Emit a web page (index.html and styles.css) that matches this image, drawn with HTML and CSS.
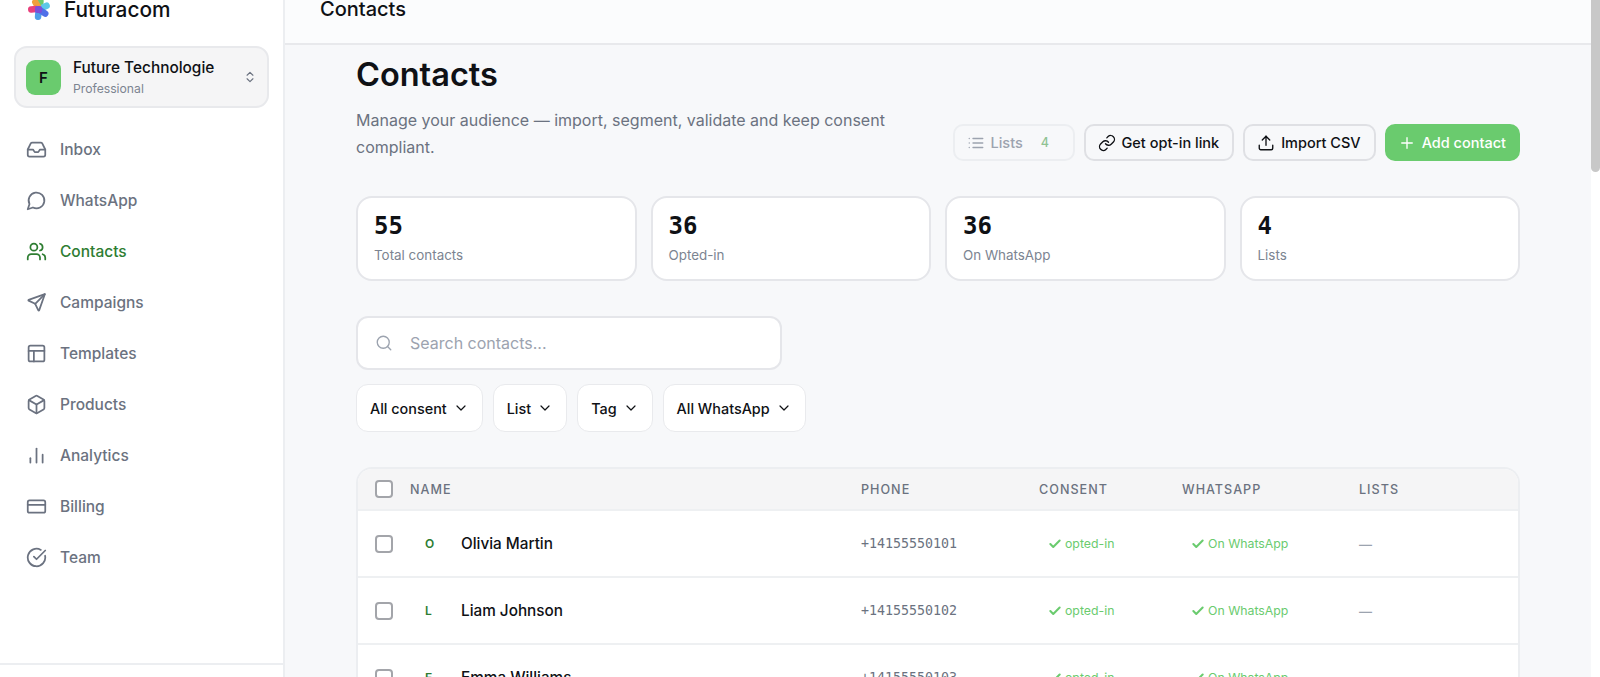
FILE: index.html
```html
<!DOCTYPE html>
<html lang="en">
<head>
  <meta charset="UTF-8" />
  <meta name="viewport" content="width=device-width, initial-scale=1" />
  <title>Contacts</title>
  <link rel="stylesheet" href="styles.css">
</head>
<body>
  <div class="app">
    <aside class="sidebar">
      <div class="brand">
        <svg class="brand-logo" viewBox="0 0 24 24">
          <rect x="9.5" y="-1" width="6.5" height="11" rx="3.2" fill="#6acb6e" transform="rotate(5 12 10)" />
          <rect x="9" y="-1.5" width="6.5" height="11" rx="3.2" fill="#5cc8e8" transform="rotate(65 12 10)" />
          <rect x="9" y="-1" width="6.5" height="11" rx="3.2" fill="#f0a03c" transform="rotate(-30 12 10)" />
          <rect x="9" y="-1" width="6.5" height="11" rx="3.2" fill="#e8407c" transform="rotate(-95 12 10)" />
          <rect x="9" y="-1" width="6.5" height="11" rx="3.2" fill="#4f9ee8" transform="rotate(185 12 10)" />
          <rect x="9" y="-1" width="6.5" height="11" rx="3.2" fill="#4f6fe8" transform="rotate(125 12 10)" />
          <rect x="8" y="7" width="7" height="7" rx="2" fill="#7b4fd8" />
        </svg>
        <span class="brand-name">Futuracom</span>
      </div>

      <div class="workspace">
        <div class="workspace-avatar">F</div>
        <div class="workspace-text">
          <div class="workspace-name">Future Technologie</div>
          <div class="workspace-plan">Professional</div>
        </div>
        <svg class="icon workspace-chevrons" viewBox="0 0 24 24"><path d="m7 15 5 5 5-5" /><path d="m7 9 5-5 5 5" /></svg>
      </div>

      <nav class="nav">
        <a class="nav-item">
          <svg class="icon" viewBox="0 0 24 24"><path d="M22 12h-6l-2 3h-4l-2-3H2" /><path d="M5.45 5.11 2 12v6a2 2 0 0 0 2 2h16a2 2 0 0 0 2-2v-6l-3.45-6.89A2 2 0 0 0 16.76 4H7.24a2 2 0 0 0-1.79 1.11z" /></svg>
          Inbox
        </a>
        <a class="nav-item">
          <svg class="icon" viewBox="0 0 24 24"><path d="M7.9 20A9 9 0 1 0 4 16.1L2 22z" /></svg>
          WhatsApp
        </a>
        <a class="nav-item active">
          <svg class="icon" viewBox="0 0 24 24"><path d="M16 21v-2a4 4 0 0 0-4-4H6a4 4 0 0 0-4 4v2" /><circle cx="9" cy="7" r="4" /><path d="M22 21v-2a4 4 0 0 0-3-3.87" /><path d="M16 3.13a4 4 0 0 1 0 7.75" /></svg>
          Contacts
        </a>
        <a class="nav-item">
          <svg class="icon" viewBox="0 0 24 24"><path d="M21.5 2.5 10.5 13.5" /><path d="M21.5 2.5 15 21a.5.5 0 0 1-.9.05L10.5 13.5 2.95 9.9a.5.5 0 0 1 .05-.9z" /></svg>
          Campaigns
        </a>
        <a class="nav-item">
          <svg class="icon" viewBox="0 0 24 24"><rect x="3" y="3" width="18" height="18" rx="2" /><path d="M3 9h18" /><path d="M9 21V9" /></svg>
          Templates
        </a>
        <a class="nav-item">
          <svg class="icon" viewBox="0 0 24 24"><path d="M21 8a2 2 0 0 0-1-1.73l-7-4a2 2 0 0 0-2 0l-7 4A2 2 0 0 0 3 8v8a2 2 0 0 0 1 1.73l7 4a2 2 0 0 0 2 0l7-4A2 2 0 0 0 21 16z" /><path d="m3.3 7 8.7 5 8.7-5" /><path d="M12 22V12" /></svg>
          Products
        </a>
        <a class="nav-item">
          <svg class="icon" viewBox="0 0 24 24"><path d="M12 20V4" /><path d="M19 20v-9" /><path d="M5 20v-5" /></svg>
          Analytics
        </a>
        <a class="nav-item">
          <svg class="icon" viewBox="0 0 24 24"><rect x="2" y="5" width="20" height="14" rx="2" /><path d="M2 10h20" /></svg>
          Billing
        </a>
        <a class="nav-item">
          <svg class="icon" viewBox="0 0 24 24"><path d="M21.8 10A10 10 0 1 1 17 3.34" /><path d="m9 11 3 3L22 4" /></svg>
          Team
        </a>
      </nav>

      <div class="sidebar-footer"></div>
    </aside>

    <main class="main">
      <header class="topbar">Contacts</header>

      <div class="content">
        <h1 class="page-title">Contacts</h1>

        <div class="page-head">
          <p class="page-desc">Manage your audience — import, segment, validate and keep consent compliant.</p>
          <div class="actions">
            <button class="btn btn-muted">
              <svg class="icon" viewBox="0 0 24 24"><path d="M8 6h13" /><path d="M8 12h13" /><path d="M8 18h13" /><path d="M3 6h.01" /><path d="M3 12h.01" /><path d="M3 18h.01" /></svg>
              Lists <span class="btn-count">4</span>
            </button>
            <button class="btn">
              <svg class="icon" viewBox="0 0 24 24"><path d="M10 13a5 5 0 0 0 7.54.54l3-3a5 5 0 0 0-7.07-7.07l-1.72 1.71" /><path d="M14 11a5 5 0 0 0-7.54-.54l-3 3a5 5 0 0 0 7.07 7.07l1.71-1.71" /></svg>
              Get opt-in link
            </button>
            <button class="btn">
              <svg class="icon" viewBox="0 0 24 24"><path d="M21 15v4a2 2 0 0 1-2 2H5a2 2 0 0 1-2-2v-4" /><path d="m17 8-5-5-5 5" /><path d="M12 3v12" /></svg>
              Import CSV
            </button>
            <button class="btn btn-primary">
              <svg class="icon" viewBox="0 0 24 24"><path d="M5 12h14" /><path d="M12 5v14" /></svg>
              Add contact
            </button>
          </div>
        </div>

        <div class="stats">
          <div class="stat"><div class="stat-value">55</div><div class="stat-label">Total contacts</div></div>
          <div class="stat"><div class="stat-value">36</div><div class="stat-label">Opted-in</div></div>
          <div class="stat"><div class="stat-value">36</div><div class="stat-label">On WhatsApp</div></div>
          <div class="stat"><div class="stat-value">4</div><div class="stat-label">Lists</div></div>
        </div>

        <div class="search">
          <svg class="icon" viewBox="0 0 24 24"><circle cx="11" cy="11" r="8" /><path d="m21 21-4.3-4.3" /></svg>
          <span>Search contacts...</span>
        </div>

        <div class="filters">
          <button class="filter">All consent <svg class="icon" viewBox="0 0 24 24"><path d="m6 9 6 6 6-6" /></svg></button>
          <button class="filter">List <svg class="icon" viewBox="0 0 24 24"><path d="m6 9 6 6 6-6" /></svg></button>
          <button class="filter">Tag <svg class="icon" viewBox="0 0 24 24"><path d="m6 9 6 6 6-6" /></svg></button>
          <button class="filter">All WhatsApp <svg class="icon" viewBox="0 0 24 24"><path d="m6 9 6 6 6-6" /></svg></button>
        </div>

        <div class="table">
          <div class="row row-head">
            <span class="checkbox"></span>
            <span>Name</span>
            <span>Phone</span>
            <span>Consent</span>
            <span>WhatsApp</span>
            <span>Lists</span>
          </div>
          <div class="row">
            <span class="checkbox"></span>
            <span class="contact"><span class="contact-initial">O</span>Olivia Martin</span>
            <span class="phone">+14155550101</span>
            <span class="tag"><svg class="icon" viewBox="0 0 24 24"><path d="M20 6 9 17l-5-5" /></svg>opted-in</span>
            <span class="tag"><svg class="icon" viewBox="0 0 24 24"><path d="M20 6 9 17l-5-5" /></svg>On WhatsApp</span>
            <span class="none">—</span>
          </div>
          <div class="row">
            <span class="checkbox"></span>
            <span class="contact"><span class="contact-initial">L</span>Liam Johnson</span>
            <span class="phone">+14155550102</span>
            <span class="tag"><svg class="icon" viewBox="0 0 24 24"><path d="M20 6 9 17l-5-5" /></svg>opted-in</span>
            <span class="tag"><svg class="icon" viewBox="0 0 24 24"><path d="M20 6 9 17l-5-5" /></svg>On WhatsApp</span>
            <span class="none">—</span>
          </div>
          <div class="row">
            <span class="checkbox"></span>
            <span class="contact"><span class="contact-initial">E</span>Emma Williams</span>
            <span class="phone">+14155550103</span>
            <span class="tag"><svg class="icon" viewBox="0 0 24 24"><path d="M20 6 9 17l-5-5" /></svg>opted-in</span>
            <span class="tag"><svg class="icon" viewBox="0 0 24 24"><path d="M20 6 9 17l-5-5" /></svg>On WhatsApp</span>
            <span class="none">—</span>
          </div>
        </div>
      </div>
    </main>

    <div class="scrollbar"><div class="scrollbar-thumb"></div></div>
  </div>
</body>
</html>
```

FILE: styles.css
```css
* {
  box-sizing: border-box;
}

html, body {
  margin: 0;
  height: 100%;
  overflow: hidden;
}

body {
  font-family: Inter, "Noto Sans", sans-serif;
  color: #0f1115;
  background: #f7f8fa;
}

.app {
  display: flex;
  height: 677px;
}

.icon {
  width: 20px;
  height: 20px;
  flex: none;
  fill: none;
  stroke: currentColor;
  stroke-width: 2;
  stroke-linecap: round;
  stroke-linejoin: round;
}

/* sidebar */
.sidebar {
  width: 285px;
  flex: none;
  display: flex;
  flex-direction: column;
  background: #fff;
  border-right: 2px solid #eceef1;
}

.brand {
  height: 46px;
  display: flex;
  align-items: flex-start;
  gap: 13px;
  padding-left: 27px;
}

.brand-logo {
  width: 24px;
  height: 24px;
  margin-top: -1px;
  overflow: visible;
}

.brand-name {
  font-size: 20.8px;
  font-weight: 500;
  line-height: 20px;
}

.workspace {
  margin: 0 14px;
  height: 62px;
  display: flex;
  align-items: center;
  gap: 12px;
  padding: 0 10px 0 10px;
  background: #f5f5f6;
  border: 2px solid #e8e9ec;
  border-radius: 13px;
}

.workspace-avatar {
  width: 35px;
  height: 35px;
  flex: none;
  display: flex;
  align-items: center;
  justify-content: center;
  background: #6acb6e;
  border-radius: 9px;
  font-size: 15px;
  font-weight: 600;
}

.workspace-text {
  flex: 1;
  padding-top: 1px;
}

.workspace-name {
  font-size: 15.4px;
  font-weight: 500;
  line-height: 20px;
}

.workspace-plan {
  font-size: 12.2px;
  line-height: 18px;
  margin-top: 2px;
  color: #7c8491;
}

.workspace-chevrons {
  width: 14px;
  height: 18px;
  color: #6b7280;
}

.nav {
  flex: 1;
  padding-top: 16px;
}

.nav-item {
  height: 51px;
  display: flex;
  align-items: center;
  gap: 13px;
  padding-left: 26px;
  font-size: 15.5px;
  font-weight: 500;
  color: #6b7280;
}

.nav-item .icon {
  width: 21px;
  height: 21px;
}

.nav-item.active {
  color: #2e7d32;
}

.sidebar-footer {
  height: 14px;
  border-top: 2px solid #eceef1;
}

/* main column */
.main {
  flex: 1;
  min-width: 0;
  overflow: hidden;
}

.topbar {
  height: 45px;
  padding-left: 35px;
  background: #fbfcfd;
  border-bottom: 2px solid #e8e9ec;
  font-size: 20px;
  font-weight: 500;
  line-height: 19px;
}

.content {
  width: 1164px;
  margin: 0 auto;
}

.page-title {
  margin: 11px 0 0;
  font-size: 32.5px;
  font-weight: 600;
  line-height: 38px;
}

.page-head {
  display: flex;
  justify-content: space-between;
  align-items: flex-end;
  margin-top: 13px;
}

.page-desc {
  width: 560px;
  margin: 0;
  font-size: 16px;
  line-height: 27px;
  color: #6b7280;
}

.actions {
  display: flex;
  gap: 9px;
}

.btn {
  height: 37px;
  display: flex;
  align-items: center;
  gap: 6px;
  padding: 0 13px 0 12px;
  font: 500 14.5px Inter, sans-serif;
  color: #0f1115;
  background: #f7f8fa;
  border: 2px solid #dfe0e4;
  border-radius: 10px;
}

.btn .icon {
  width: 18px;
  height: 18px;
  stroke-width: 1.8;
}

.btn-muted {
  width: 122px;
  color: #9ca3af;
  border-color: #eceef1;
}

.btn-count {
  margin-left: 12px;
  font-size: 12.5px;
  color: #8fc293;
}

.btn-primary {
  padding: 0 12px 0 11px;
  color: #fff;
  background: #6acb6e;
  border-color: #6acb6e;
}

/* stat cards */
.stats {
  display: grid;
  grid-template-columns: repeat(4, 1fr);
  gap: 14px;
  margin-top: 35px;
}

.stat {
  height: 85px;
  padding: 13px 16px;
  background: #fff;
  border: 2px solid #e5e6ea;
  border-radius: 16px;
}

.stat-value {
  font: 700 24px/30px "DejaVu Sans Mono", monospace;
}

.stat-label {
  margin-top: 5px;
  font-size: 13.4px;
  line-height: 18px;
  color: #7c8491;
}

/* search + filters */
.search {
  width: 426px;
  height: 54px;
  display: flex;
  align-items: center;
  gap: 17px;
  margin-top: 35px;
  padding: 0 17px;
  background: #fff;
  border: 2px solid #e5e6ea;
  border-radius: 12px;
  font-size: 16px;
  color: #9ca3af;
}

.search .icon {
  width: 18px;
  height: 18px;
  stroke-width: 1.8;
}

.filters {
  display: flex;
  gap: 10px;
  margin-top: 14px;
}

.filter {
  height: 48px;
  display: flex;
  align-items: center;
  gap: 6px;
  padding: 0 13px;
  font: 500 14.4px Inter, sans-serif;
  color: #0f1115;
  background: #fff;
  border: 1px solid #e9eaed;
  border-radius: 12px;
}

.filter .icon {
  width: 16px;
  height: 16px;
  stroke-width: 1.8;
}

/* contacts table */
.table {
  margin-top: 35px;
  background: #fff;
  border: 2px solid #eceef1;
  border-bottom: 0;
  border-radius: 16px 16px 0 0;
}

.row {
  height: 67px;
  display: grid;
  grid-template-columns: 35px 451px 178px 143px 177px 1fr;
  align-items: center;
  padding-left: 17px;
  border-top: 2px solid #eef0f2;
}

.row-head {
  height: 40px;
  border-top: 0;
  border-radius: 14px 14px 0 0;
  background: #f5f5f6;
  font-size: 12.6px;
  font-weight: 500;
  letter-spacing: 1px;
  text-transform: uppercase;
  color: #6b7280;
}

.checkbox {
  width: 18px;
  height: 18px;
  border: 2px solid #a3a5aa;
  border-radius: 4px;
  background: #fff;
}

.contact {
  display: flex;
  align-items: center;
  font-size: 15.3px;
  font-weight: 500;
}

.contact-initial {
  width: 51px;
  padding-left: 15px;
  font-size: 12px;
  font-weight: 600;
  color: #2e7d32;
}

.phone {
  font: 13.3px "DejaVu Sans Mono", monospace;
  color: #6b7280;
}

.tag {
  display: flex;
  align-items: center;
  gap: 3px;
  padding-left: 9px;
  font-size: 12.3px;
  color: #6acb6e;
}

.tag .icon {
  width: 14px;
  height: 14px;
  stroke-width: 3.5;
}

.none {
  color: #9ca3af;
  font-size: 13px;
  font-weight: 600;
}

/* fake scrollbar */
.scrollbar {
  width: 9px;
  flex: none;
  background: #fff;
}

.scrollbar-thumb {
  height: 172px;
  border-radius: 0 0 5px 5px;
  background: #c8c8c8;
}
```
